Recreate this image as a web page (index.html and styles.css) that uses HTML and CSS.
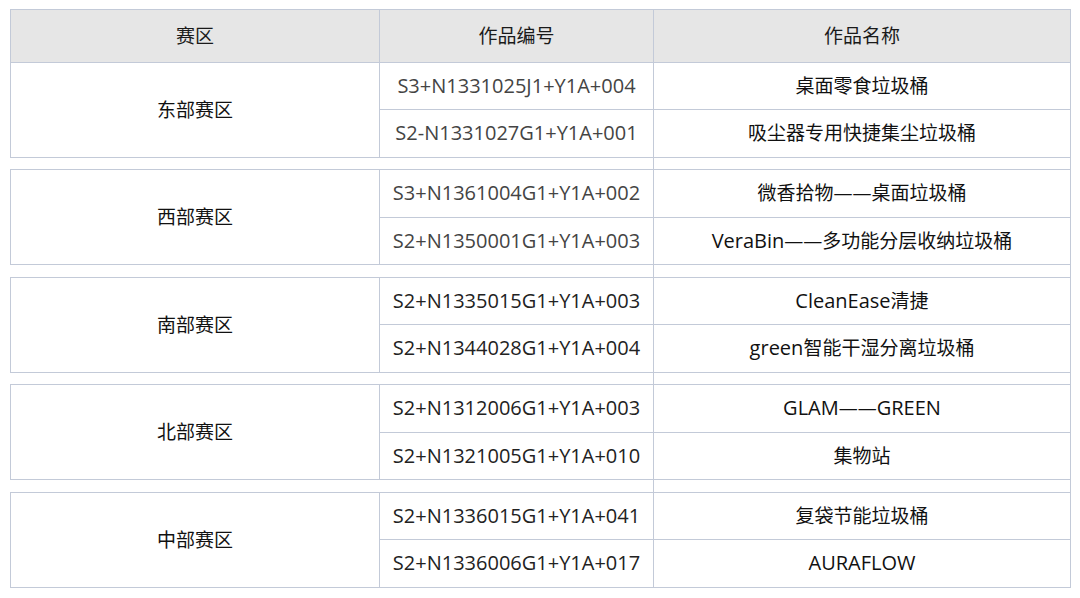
FILE: index.html
```html
<!DOCTYPE html>
<html lang="zh-CN">
<head>
<meta charset="utf-8">
<title>赛区作品列表</title>
<link rel="stylesheet" href="styles.css">
</head>
<body>
<table class="works">
  <colgroup>
    <col class="c-zone">
    <col class="c-code">
    <col class="c-name">
  </colgroup>
  <thead>
    <tr class="head">
      <th>赛区</th>
      <th>作品编号</th>
      <th>作品名称</th>
    </tr>
  </thead>
  <tbody>
    <tr class="row">
      <td class="zone" rowspan="2">东部赛区</td>
      <td class="code">S3+N1331025J1+Y1A+004</td>
      <td class="name">桌面零食垃圾桶</td>
    </tr>
    <tr class="row">
      <td class="code">S2-N1331027G1+Y1A+001</td>
      <td class="name">吸尘器专用快捷集尘垃圾桶</td>
    </tr>
    <tr class="gap"><td class="gap-a" colspan="2"></td><td class="gap-b"></td></tr>

    <tr class="row">
      <td class="zone" rowspan="2">西部赛区</td>
      <td class="code">S3+N1361004G1+Y1A+002</td>
      <td class="name">微香拾物——桌面垃圾桶</td>
    </tr>
    <tr class="row">
      <td class="code">S2+N1350001G1+Y1A+003</td>
      <td class="name"><span class="lat">VeraBin</span>——多功能分层收纳垃圾桶</td>
    </tr>
    <tr class="gap"><td class="gap-a" colspan="2"></td><td class="gap-b"></td></tr>

    <tr class="row">
      <td class="zone" rowspan="2">南部赛区</td>
      <td class="code dark">S2+N1335015G1+Y1A+003</td>
      <td class="name"><span class="lat">CleanEase</span>清捷</td>
    </tr>
    <tr class="row">
      <td class="code dark">S2+N1344028G1+Y1A+004</td>
      <td class="name"><span class="lat">green</span>智能干湿分离垃圾桶</td>
    </tr>
    <tr class="gap"><td class="gap-a" colspan="2"></td><td class="gap-b"></td></tr>

    <tr class="row">
      <td class="zone" rowspan="2">北部赛区</td>
      <td class="code dark">S2+N1312006G1+Y1A+003</td>
      <td class="name"><span class="lat">GLAM</span>——<span class="lat">GREEN</span></td>
    </tr>
    <tr class="row">
      <td class="code dark">S2+N1321005G1+Y1A+010</td>
      <td class="name">集物站</td>
    </tr>
    <tr class="gap"><td class="gap-a" colspan="2"></td><td class="gap-b"></td></tr>

    <tr class="row">
      <td class="zone" rowspan="2">中部赛区</td>
      <td class="code dark">S2+N1336015G1+Y1A+041</td>
      <td class="name">复袋节能垃圾桶</td>
    </tr>
    <tr class="row">
      <td class="code dark">S2+N1336006G1+Y1A+017</td>
      <td class="name"><span class="lat">AURAFLOW</span></td>
    </tr>
  </tbody>
</table>
</body>
</html>
```

FILE: styles.css
```css
html, body {
  margin: 0;
  background: #ffffff;
}

body {
  padding: 9px 10px 0 10px;
  font-family: "Open Sans", "Noto Sans CJK SC", sans-serif;
  font-size: 19px;
  color: #1a1a1a;
}

.works {
  width: 1060px;
  border-collapse: collapse;
  table-layout: fixed;
}

.c-zone { width: 369px; }
.c-code { width: 274px; }
.c-name { width: 417px; }

.works th,
.works td {
  border: 1px solid #c3cad8;
  padding: 0;
  text-align: center;
  vertical-align: middle;
  line-height: 24px;
}

.head {
  height: 52.5px;
}

.head th {
  background: #e6e6e6;
  font-weight: normal;
  color: #1a1a1a;
}

.row {
  height: 47.5px;
}

.code {
  color: #444444;
  font-size: 20px;
}

.code.dark {
  color: #222222;
}

.name {
  color: #111111;
}

.lat {
  font-size: 20px;
}

.zone {
  color: #111111;
}

.gap {
  height: 12.5px;
}

.works .gap-a {
  border-left: none;
  border-right: none;
}

.works .gap-b {
  border-left: 1px solid #c3cad8;
  border-right: 1px solid #c3cad8;
}
```
